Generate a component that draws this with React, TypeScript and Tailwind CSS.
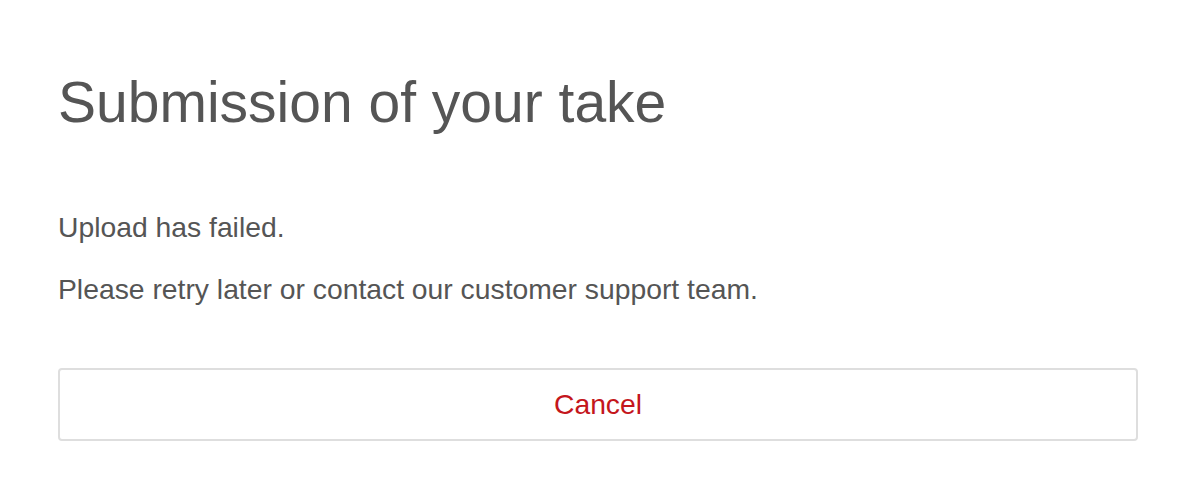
export default function App() {
  return (
    <div
      className="min-h-[498px] bg-white px-[58px] pt-[70px] text-[#555555]"
      style={{ fontFamily: '"Liberation Sans", Arial, sans-serif' }}
    >
      <h1 className="text-[57px] leading-[64px] font-normal">Submission of your take</h1>

      <p className="mt-[76px] text-[28.3px] leading-[34px]">Upload has failed.</p>
      <p className="mt-[28px] text-[28.3px] leading-[34px]">
        Please retry later or contact our customer support team.
      </p>

      <button className="mt-[62px] flex h-[73px] w-full items-center justify-center rounded-[4px] border-2 border-[#dedede] bg-white text-[28.3px] text-[#c4161c]">
        Cancel
      </button>
    </div>
  );
}
